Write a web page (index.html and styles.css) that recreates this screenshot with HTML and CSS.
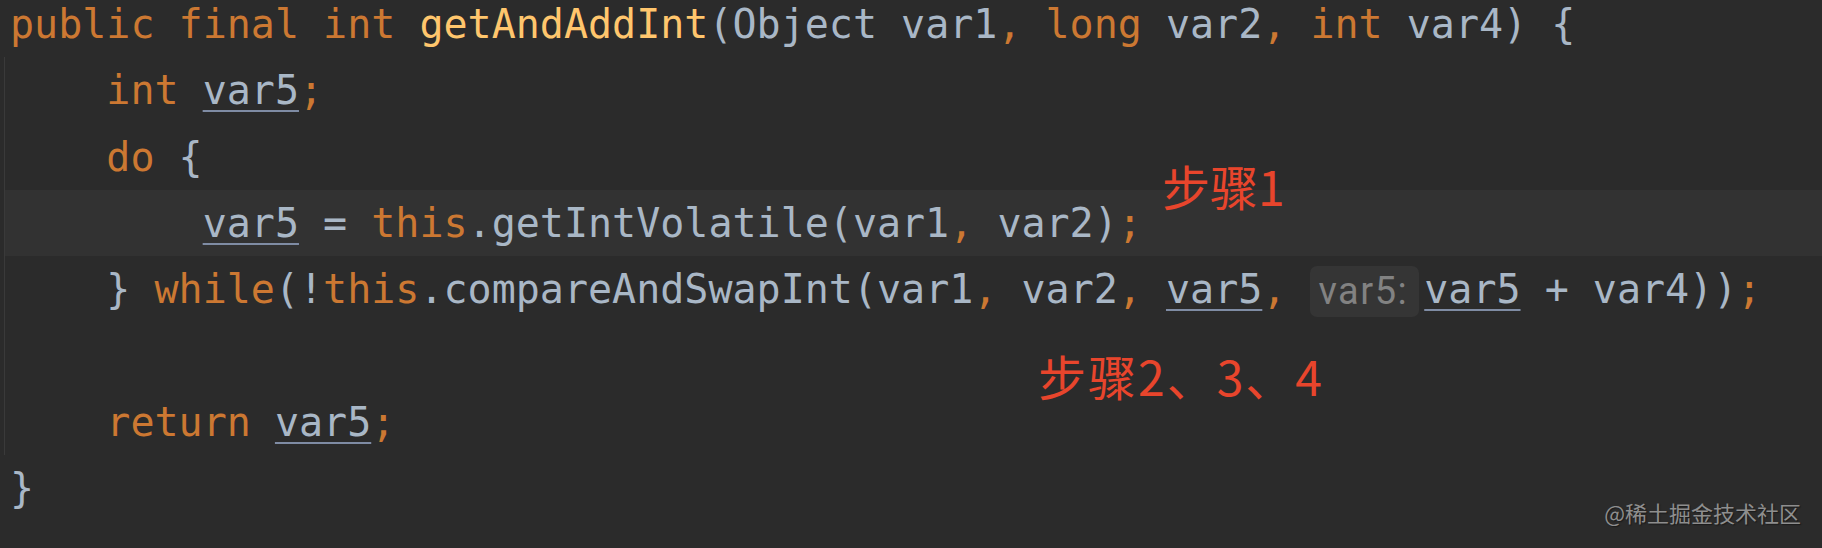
FILE: index.html
```html
<!DOCTYPE html>
<html lang="zh-CN">
<head>
<meta charset="utf-8">
<title>getAndAddInt</title>
<link rel="stylesheet" href="styles.css">
</head>
<body>
<div class="editor">
  <div class="code">
    <div class="line top"><span class="kw">public final int </span><span class="fn">getAndAddInt</span>(Object var1<span class="kw">, long </span>var2<span class="kw">, int </span>var4) {</div>
    <div class="body">
      <div class="line">    <span class="kw">int </span><span class="var">var5</span><span class="kw">;</span></div>
      <div class="line">    <span class="kw">do </span>{</div>
      <div class="line current">        <span class="var">var5</span> = <span class="kw">this</span>.getIntVolatile(var1<span class="kw">, </span>var2)<span class="kw">;</span></div>
      <div class="line">    } <span class="kw">while</span>(!<span class="kw">this</span>.compareAndSwapInt(var1<span class="kw">, </span>var2<span class="kw">, </span><span class="var">var5</span><span class="kw">, </span><span class="hint">var5:</span><span class="var">var5</span> + var4))<span class="kw">;</span></div>
      <div class="line"> </div>
      <div class="line">    <span class="kw">return </span><span class="var">var5</span><span class="kw">;</span></div>
    </div>
    <div class="line top">}</div>
  </div>
  <div class="note note-1">步骤1</div>
  <div class="note note-2">步骤2、3、4</div>
  <div class="mark">@稀土掘金技术社区</div>
</div>
</body>
</html>
```

FILE: styles.css
```css
html, body {
  margin: 0;
  padding: 0;
  background: #2b2b2b;
}

body {
  width: 1822px;
  height: 548px;
  overflow: hidden;
}

.editor {
  position: relative;
  height: 548px;
  font-family: "DejaVu Sans Mono", "Liberation Mono", monospace;
  font-size: 40px;
  color: #a9b7c6;
}

.code {
  margin-top: -9px;
  padding-left: 4px;
}

.line {
  height: 66.3px;
  line-height: 66.3px;
  white-space: pre;
}

.line.top {
  padding-left: 6px;
}

.body {
  border-left: 1px solid #3a3a3a;
}

.body .line {
  padding-left: 5px;
}

.line.current {
  background: #323232;
}

.kw {
  color: #cc7832;
}

.fn {
  color: #ffc66d;
}

.var {
  text-decoration: underline;
  text-decoration-color: #7f8ca4;
  text-decoration-thickness: 2px;
  text-underline-offset: 6px;
}

.hint {
  display: inline-block;
  vertical-align: top;
  margin-top: 10px;
  margin-right: 5px;
  height: 51px;
  line-height: 51px;
  padding: 0 11px 0 8px;
  border-radius: 7px;
  background: #353535;
  color: #828282;
  font-family: Roboto, "Noto Sans", sans-serif;
  font-size: 38px;
  letter-spacing: 1.5px;
}

.note {
  position: absolute;
  font-family: "Noto Sans CJK SC", "Noto Sans", sans-serif;
  font-size: 48px;
  line-height: 48px;
  color: #e8452c;
  white-space: nowrap;
}

.note-1 {
  left: 1162px;
  top: 170px;
}

.note-2 {
  left: 1038px;
  top: 360px;
  letter-spacing: 2px;
}

.mark {
  position: absolute;
  right: 21px;
  top: 506px;
  font-family: "Noto Sans CJK SC", "Noto Sans", sans-serif;
  font-size: 22px;
  line-height: 30px;
  color: #8e8e8e;
  text-shadow: 1px 1px 1px #1a1a1a;
}
```
